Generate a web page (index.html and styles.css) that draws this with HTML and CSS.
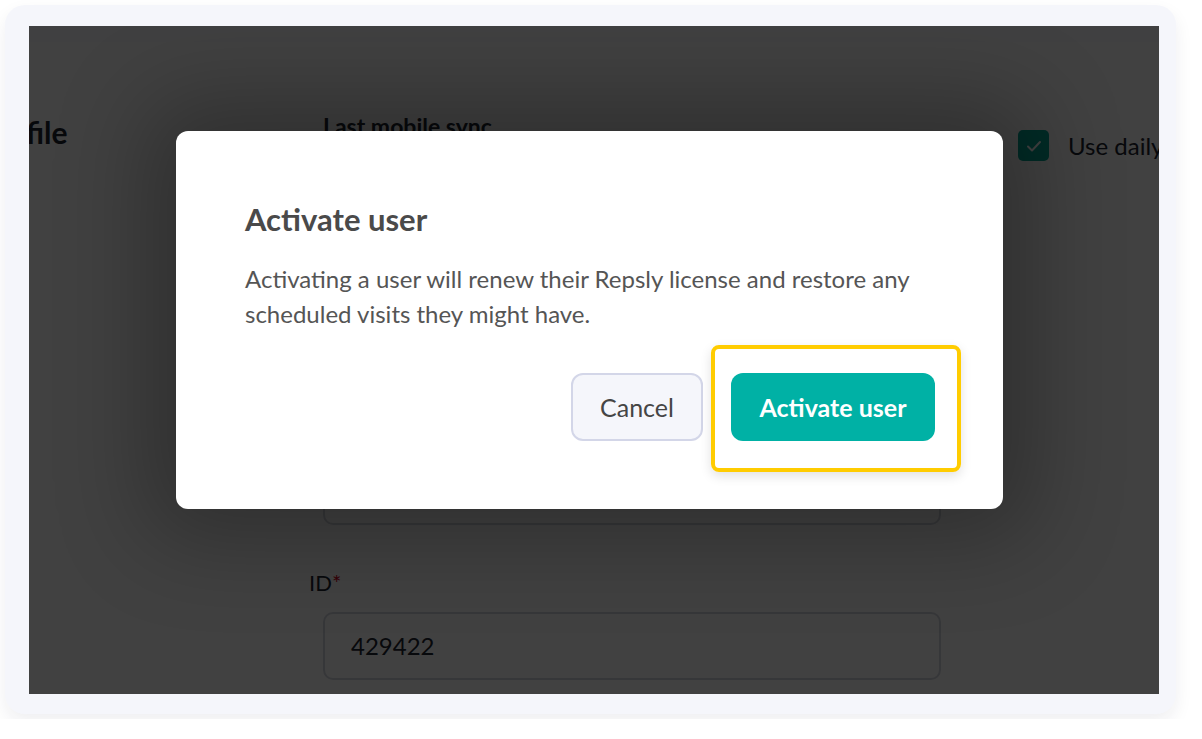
FILE: index.html
```html
<!DOCTYPE html>
<html>
<head>
<meta charset="utf-8">
<link rel="stylesheet" href="styles.css">
</head>
<body>
<div class="frame">
  <div class="screen">
    <div class="page">
      <div class="topbar"></div>
      <div class="content">
        <h1 class="page-title">Profile</h1>
        <div class="form">
          <div class="label sync">Last mobile sync</div>
          <div class="field hidden-field"></div>
          <div class="label id-label">ID<span class="req">*</span></div>
          <div class="field">429422</div>
        </div>
        <label class="check">
          <span class="box"><svg width="16" height="12" viewBox="0 0 16 12"><path d="M2 6.5l4 4L14 2" fill="none" stroke="#fff" stroke-width="2" stroke-linecap="round" stroke-linejoin="round"/></svg></span>
          <span class="check-text">Use daily working hours</span>
        </label>
      </div>
    </div>
    <div class="overlay"></div>
    <div class="modal">
      <h2 class="modal-title">Activate user</h2>
      <p class="modal-text">Activating a user will renew their Repsly license and restore any scheduled visits they might have.</p>
      <div class="actions">
        <button class="btn btn-cancel">Cancel</button>
        <button class="btn btn-primary">Activate user</button>
      </div>
      <div class="highlight"></div>
    </div>
  </div>
</div>
</body>
</html>
```

FILE: styles.css
```css
* { box-sizing: border-box; }
html, body { margin: 0; padding: 0; background: #ffffff; }
body { font-family: Lato, "Open Sans", sans-serif; }

.frame {
  margin: 5px;
  width: 1171px;
  height: 709px;
  background: #f5f6fb;
  border-radius: 20px;
  padding: 21px 17px 20px 24px;
  box-shadow: 0 8px 18px rgba(30, 35, 60, 0.07);
}

.screen {
  position: relative;
  width: 1130px;
  height: 668px;
  overflow: hidden;
  background: #ffffff;
}

.page { display: flex; flex-direction: column; height: 100%; }
.topbar { height: 16px; background: #fafbfd; flex: none; }

.content {
  display: flex;
  align-items: flex-start;
  padding-top: 70px;
}

.page-title {
  margin: 2px 0 0 -49px;
  width: 343px;
  flex: none;
  font-size: 30px;
  font-weight: 700;
  color: #1e2530;
  line-height: 36px;
  white-space: nowrap;
}

.form {
  width: 695px;
  flex: none;
  display: flex;
  flex-direction: column;
}

.label {
  font-size: 22px;
  color: #1e2530;
  line-height: 28px;
}
.sync { font-weight: 700; font-size: 23px; }
.id-label { margin-left: -14px; margin-top: 44px; }
.req { color: #d0021b; }

.field {
  width: 618px;
  height: 68px;
  border: 2px solid #d5d8e0;
  border-radius: 10px;
  padding-left: 26px;
  font-size: 24px;
  line-height: 64px;
  color: #1e2530;
  background: #fff;
  margin-top: 15px;
}
.hidden-field { margin-top: 317px; }

.check {
  display: flex;
  align-items: center;
  gap: 19px;
  margin-top: 18px;
  white-space: nowrap;
}
.box {
  width: 31px;
  height: 31px;
  border-radius: 5px;
  background: #00a896;
  display: flex;
  align-items: center;
  justify-content: center;
  flex: none;
}
.check-text { font-size: 24px; color: #1e2530; }

.overlay {
  position: absolute;
  inset: 0;
  background: rgba(0, 0, 0, 0.745);
}

.modal {
  position: absolute;
  left: 147px;
  top: 105px;
  width: 827px;
  height: 378px;
  background: #ffffff;
  border-radius: 12px;
  padding: 70px 68px 68px 69px;
  box-shadow: 0 0 90px 30px rgba(0, 0, 0, 0.28);
  display: flex;
  flex-direction: column;
}

.modal-title {
  margin: 0;
  font-size: 31px;
  line-height: 36px;
  font-weight: 700;
  color: #4a4a4a;
}

.modal-text {
  margin: 24px 0 0;
  font-size: 24px;
  line-height: 35px;
  color: #555555;
  max-width: 690px;
}

.actions {
  margin-top: auto;
  display: flex;
  justify-content: flex-end;
  gap: 28px;
}

.btn {
  height: 68px;
  border-radius: 12px;
  font-family: Lato, "Open Sans", sans-serif;
  font-size: 25px;
  cursor: pointer;
  padding: 0;
}
.btn-cancel {
  width: 132px;
  background: #f5f6fb;
  border: 2px solid #d3d6e8;
  color: #454545;
}
.btn-primary {
  width: 204px;
  background: #00b1a5;
  border: none;
  color: #ffffff;
  font-weight: 700;
}

.highlight {
  position: absolute;
  left: 535px;
  top: 214px;
  width: 250px;
  height: 127px;
  border: 4px solid #ffcc00;
  border-radius: 8px;
  box-shadow: 0 4px 12px rgba(0, 0, 0, 0.12);
  pointer-events: none;
}
```
